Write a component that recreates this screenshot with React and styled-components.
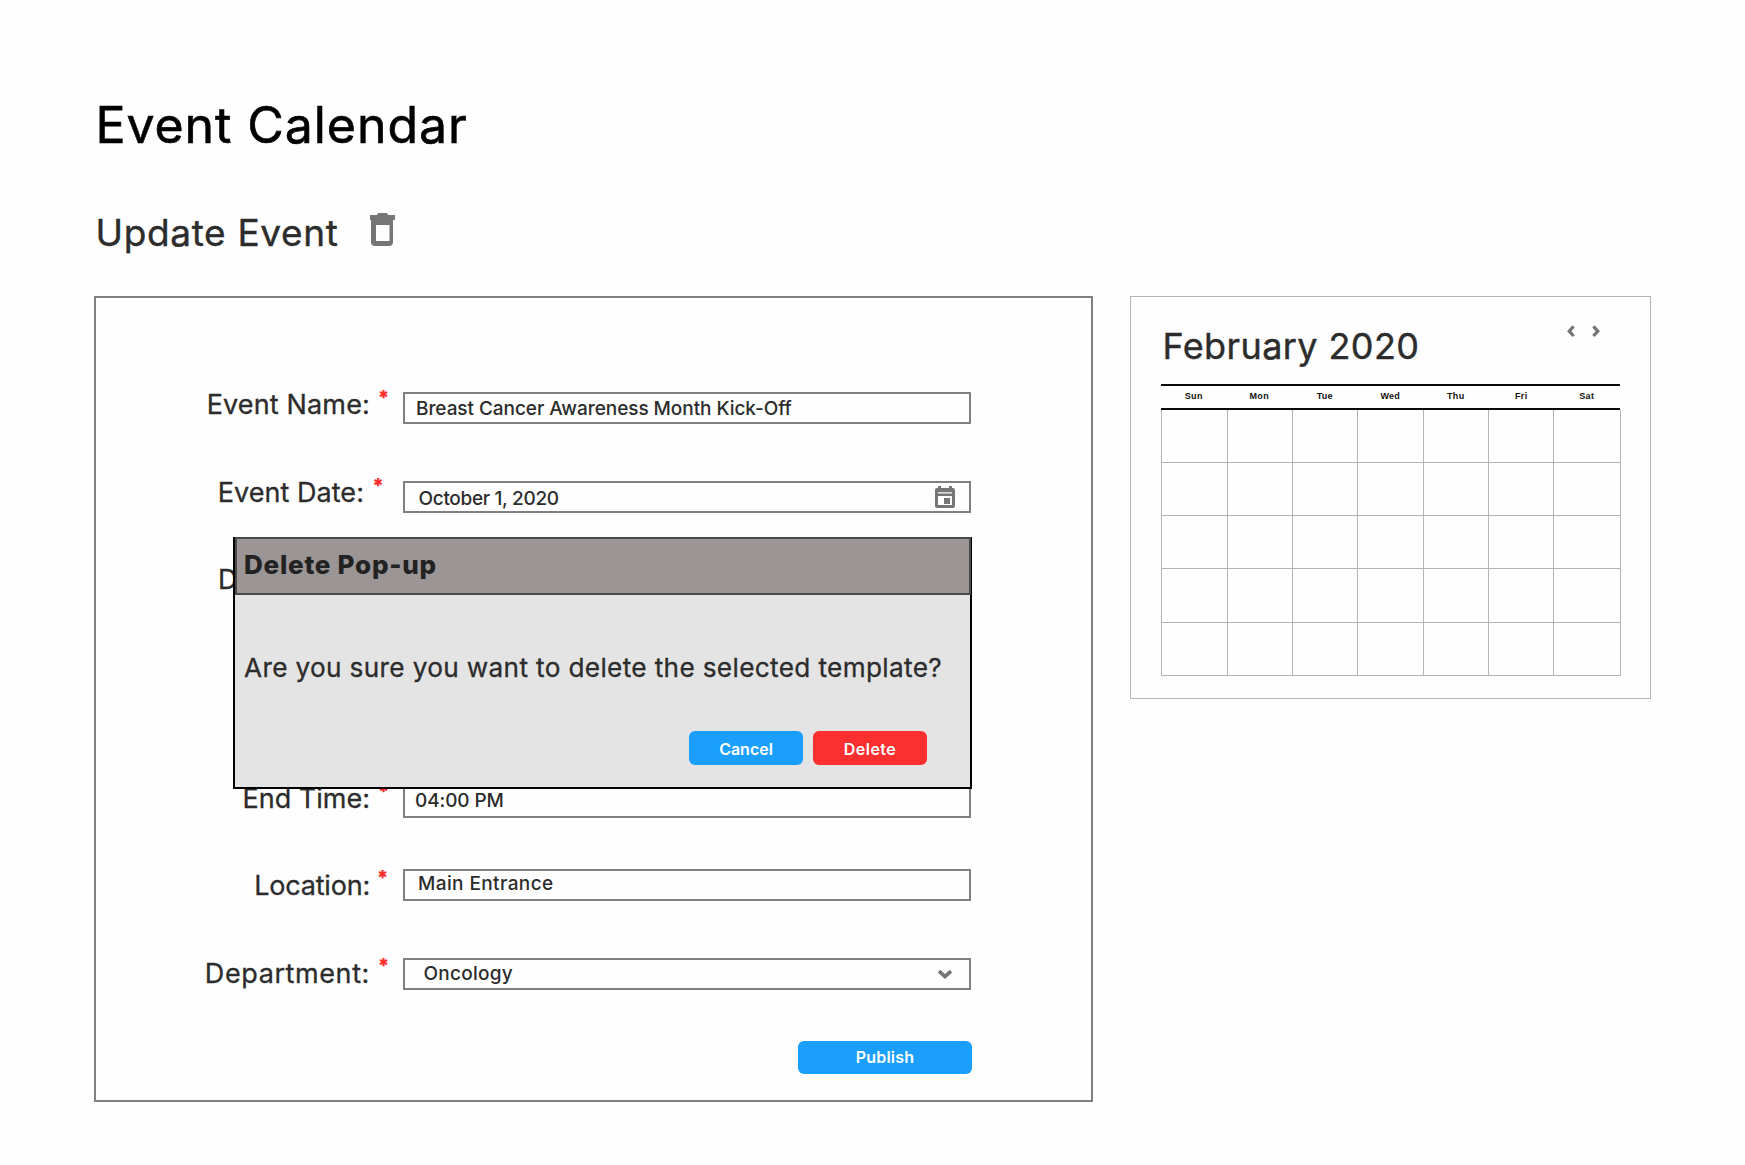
import React from "react";
import styled, { createGlobalStyle } from "styled-components";

const GlobalStyle = createGlobalStyle`
  *, *::before, *::after { box-sizing: border-box; }
  body {
    margin: 0;
    background: #fefefe;
    color: #2c2c2c;
    font-family: Inter, "Open Sans", sans-serif;
  }
`;

const Page = styled.main`
  position: relative;
  height: 1165px;
  padding: 95px 94px 0;
  overflow: hidden;
`;

const Title = styled.h1`
  margin: 0;
  padding-left: 1.5px;
  color: #000;
  font-size: 50px;
  font-weight: 400;
  line-height: 60px;
  letter-spacing: 0.93px;
  -webkit-text-stroke: 0.6px #000;
`;

const SubHeader = styled.div`
  display: flex;
  align-items: flex-start;
  height: 52px;
  margin-top: 54px;
`;

const SubTitle = styled.h2`
  width: 276px;
  margin: 3px 0 0;
  padding-left: 1.5px;
  font-size: 37px;
  font-weight: 400;
  line-height: 42px;
  letter-spacing: 0.65px;
  white-space: nowrap;
  -webkit-text-stroke: 0.4px #2c2c2c;
`;

const Columns = styled.div`
  display: flex;
  align-items: flex-start;
  gap: 37px;
  margin-top: 35px;
`;

const FormPanel = styled.form`
  width: 999px;
  height: 806px;
  padding: 94px 120px 0 0;
  border: 2px solid #808080;
`;

const FormRow = styled.div`
  display: grid;
  grid-template-columns: 1fr 33px 568px;
  grid-template-rows: ${(p) => p.$height || 32}px;
  align-items: start;
  margin-bottom: ${(p) => p.$after}px;
`;

const Label = styled.label`
  margin: ${(p) => p.$shift}px ${(p) => p.$inset || 0}px 0 0;
  text-align: right;
  font-size: 27px;
  line-height: 32px;
  letter-spacing: ${(p) => p.$track}px;
  white-space: nowrap;
  -webkit-text-stroke: 0.3px #2c2c2c;
`;

const Required = styled.span`
  margin: ${(p) => p.$shift}px 0 0 ${(p) => p.$left}px;
  color: #fb2f2f;
  font-size: 20px;
  font-weight: 900;
  line-height: 20px;
`;

const Field = styled.div`
  display: flex;
  align-items: flex-start;
  justify-content: space-between;
  height: 100%;
  padding-left: ${(p) => p.$indent}px;
  border: 2px solid #808080;
`;

const Value = styled.span`
  margin-top: ${(p) => p.$shift}px;
  font-size: 19px;
  font-weight: 500;
  line-height: 28px;
  letter-spacing: ${(p) => p.$track}px;
`;

const Button = styled.button`
  display: flex;
  justify-content: center;
  width: ${(p) => p.$width}px;
  height: ${(p) => p.$height}px;
  padding: ${(p) => p.$top}px 0 0;
  border: 0;
  border-radius: 6px;
  background: ${(p) => (p.$danger ? "#fb2f2f" : "#1a9ffe")};
  color: #fff;
  font: 600 16px/20px Inter, "Open Sans", sans-serif;
  letter-spacing: ${(p) => p.$track}px;
`;

const FormActions = styled.div`
  display: flex;
  justify-content: flex-end;
  margin-right: -1px;
`;

const CalendarPanel = styled.section`
  width: 521px;
  height: 403px;
  padding: 28px 29px 0 30px;
  border: 1px solid #b4b4b4;
`;

const CalendarHeader = styled.div`
  display: flex;
  justify-content: space-between;
  height: 59px;
`;

const Month = styled.h3`
  margin: 0;
  padding-left: 1.5px;
  font-size: 36px;
  font-weight: 400;
  line-height: 42px;
  letter-spacing: 0.4px;
  -webkit-text-stroke: 0.4px #2c2c2c;
`;

const Pager = styled.div`
  display: flex;
  gap: 17px;
  margin-right: 21px;
`;

const Weekdays = styled.div`
  display: grid;
  grid-template-columns: repeat(7, 65.5px);
  width: 459px;
  height: 26px;
  border-top: 2px solid #0a0a0a;
  border-bottom: 2px solid #0a0a0a;
`;

const Weekday = styled.span`
  color: #111;
  text-align: center;
  font: 700 9px/21px "Liberation Sans", Arial, sans-serif;
  letter-spacing: 0.3px;
`;

const DayGrid = styled.div`
  display: grid;
  grid-template-columns: 66px 65px 65px 66px 65px 65px 67px;
  grid-template-rows: 53px 53px 53px 54px 53px;
  width: 460px;
  border-left: 1px solid #b4b4b4;
`;

const Day = styled.div`
  border-right: 1px solid #b4b4b4;
  border-bottom: 1px solid #b4b4b4;
`;

const Dialog = styled.div`
  position: absolute;
  top: 537px;
  left: 233px;
  display: flex;
  flex-direction: column;
  width: 739px;
  height: 252px;
  border: solid #000;
  border-width: 0 1px 2px 2px;
  background: #e4e4e4;
`;

const DialogTitle = styled.h4`
  height: 58px;
  margin: 0;
  padding: 10px 0 0 7px;
  border: 2px solid #4b4a4a;
  background: #9b9695;
  color: #222;
  font-size: 26px;
  font-weight: 800;
  line-height: 32px;
  letter-spacing: 0.75px;
`;

const DialogBody = styled.div`
  flex: 1;
  padding: 57px 43px 0 9px;
  border-right: 1px solid #000;
`;

const Message = styled.p`
  margin: 0;
  font-size: 26.2px;
  font-weight: 400;
  line-height: 32px;
  letter-spacing: 0.34px;
  white-space: nowrap;
  -webkit-text-stroke: 0.3px #2c2c2c;
`;

const DialogActions = styled.div`
  display: flex;
  justify-content: flex-end;
  gap: 10px;
  margin-top: 47px;
`;

const TrashIcon = styled.svg`
  display: block;
  width: 25px;
  height: 34px;
  margin-top: 4px;
`;

const EventIcon = styled.svg`
  width: 20px;
  height: 23px;
  margin: 3px 14px 0 0;
`;

const DownIcon = styled.svg`
  width: 16px;
  height: 11px;
  margin: 9px 16px 0 0;
`;

const PagerIcon = styled.svg`
  width: 8px;
  height: 13px;
`;

const weekdays = ["Sun", "Mon", "Tue", "Wed", "Thu", "Fri", "Sat"];

const rows = [
  { label: "Event Name:", value: "Breast Cancer Awareness Month Kick-Off", track: 0.15, shift: -3, star: -4.5, indent: 11, valueShift: 1, valueTrack: -0.06, after: 57 },
  { label: "Event Date:", value: "October 1, 2020", icon: "event", track: 0.05, shift: -4, star: -5.5, starLeft: 2, inset: 6, indent: 13.5, valueShift: 2, valueTrack: -0.32, after: 57 },
  { label: "Description:", value: "", track: -0.15, shift: -6, star: -4, height: 80, after: 136 },
  { label: "End Time:", value: "04:00 PM", track: 0, shift: -3, star: -4.5, indent: 10, valueShift: -1, valueTrack: -0.1, after: 51 },
  { label: "Location:", value: "Main Entrance", track: -0.2, shift: 1, star: -1.5, starLeft: 6.5, indent: 13, valueShift: -0.6, valueTrack: 0.4, after: 57 },
  { label: "Department:", value: "Oncology", icon: "down", track: 0.6, shift: 0, star: -2, indent: 18.5, valueShift: 0, valueTrack: 0.26, after: 51 },
];

function FieldIcon({ kind }) {
  if (kind === "event") {
    return (
      <EventIcon viewBox="0 0 20 23">
        <path
          fill="#757575"
          fillRule="evenodd"
          d="M3 0h3v2h8V0h3v2h1a2 2 0 0 1 2 2v16a2 2 0 0 1-2 2H2a2 2 0 0 1-2-2V4a2 2 0 0 1 2-2h1zM3 6.3v1.2h14V6.3zM3 10v9h14v-9zM9 12h6v6H9z"
        />
      </EventIcon>
    );
  }
  if (kind === "down") {
    return (
      <DownIcon viewBox="0 0 16 11">
        <path d="M2 2.2 8 7.6 14 2.2" fill="none" stroke="#757575" strokeWidth="3.6" />
      </DownIcon>
    );
  }
  return null;
}

export default function App() {
  return (
    <>
      <GlobalStyle />
      <Page>
        <Title>Event Calendar</Title>
        <SubHeader>
          <SubTitle>Update Event</SubTitle>
          <TrashIcon viewBox="0 0 25 34">
            <path
              fill="#757575"
              fillRule="evenodd"
              d="M0 2h6.5l2-2h8l2 2H25v5h-2v22a4 4 0 0 1-4 4H5a4 4 0 0 1-4-4V7H0zM6 12v16h13.500V12z"
            />
          </TrashIcon>
        </SubHeader>
        <Columns>
          <FormPanel>
            {rows.map((r) => (
              <FormRow key={r.label} $after={r.after} $height={r.height}>
                <Label $shift={r.shift} $track={r.track} $inset={r.inset}>{r.label}</Label>
                <Required $shift={r.star} $left={r.starLeft ?? 7.5}>*</Required>
                <Field $indent={r.indent || 0}>
                  <Value $shift={r.valueShift || 0} $track={r.valueTrack || 0}>{r.value}</Value>
                  <FieldIcon kind={r.icon} />
                </Field>
              </FormRow>
            ))}
            <FormActions>
              <Button type="button" $width={174} $height={33} $top={6} $track={0.2}>Publish</Button>
            </FormActions>
          </FormPanel>
          <CalendarPanel>
            <CalendarHeader>
              <Month>February 2020</Month>
              <Pager>
                <PagerIcon viewBox="0 0 8 13">
                  <path d="M6.600 1.400 2.200 6.200 6.600 11" fill="none" stroke="#757575" strokeWidth="3.2" />
                </PagerIcon>
                <PagerIcon viewBox="0 0 8 13">
                  <path d="M1.400 1.400 5.800 6.200 1.400 11" fill="none" stroke="#757575" strokeWidth="3.2" />
                </PagerIcon>
              </Pager>
            </CalendarHeader>
            <Weekdays>
              {weekdays.map((d) => (
                <Weekday key={d}>{d}</Weekday>
              ))}
            </Weekdays>
            <DayGrid>
              {Array.from({ length: 35 }, (_, i) => (
                <Day key={i} />
              ))}
            </DayGrid>
          </CalendarPanel>
        </Columns>
        <Dialog role="dialog">
          <DialogTitle>Delete Pop-up</DialogTitle>
          <DialogBody>
            <Message>Are you sure you want to delete the selected template?</Message>
            <DialogActions>
              <Button type="button" $width={114} $height={34} $top={8} $track={0}>Cancel</Button>
              <Button type="button" $danger $width={114} $height={34} $top={8} $track={0.5}>Delete</Button>
            </DialogActions>
          </DialogBody>
        </Dialog>
      </Page>
    </>
  );
}
